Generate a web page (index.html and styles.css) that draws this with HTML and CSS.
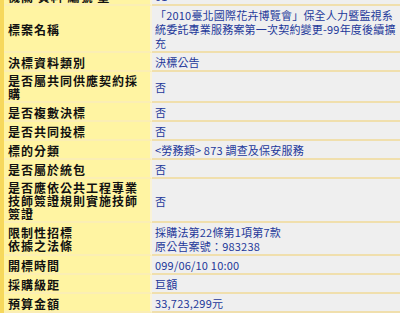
FILE: index.html
```html
<!DOCTYPE html>
<html lang="zh-Hant">
<head>
<meta charset="utf-8">
<title>決標公告</title>
<link rel="stylesheet" href="styles.css">
</head>
<body>
<div class="frame">
<table class="info">
<tbody>
<tr><th>機關 資料 編號 量</th><td>01</td></tr>
<tr><th>標案名稱</th><td>「2010臺北國際花卉博覽會」保全人力暨監視系統委託專業服務案第一次契約變更-99年度後續擴充</td></tr>
<tr><th>決標資料類別</th><td>決標公告</td></tr>
<tr><th>是否屬共同供應契約採購</th><td>否</td></tr>
<tr><th>是否複數決標</th><td>否</td></tr>
<tr><th>是否共同投標</th><td>否</td></tr>
<tr><th>標的分類</th><td>&lt;勞務類&gt; 873 調查及保安服務</td></tr>
<tr><th>是否屬於統包</th><td>否</td></tr>
<tr><th>是否應依公共工程專業技師簽證規則實施技師簽證</th><td>否</td></tr>
<tr><th>限制性招標<br>依據之法條</th><td>採購法第22條第1項第7款<br>原公告案號：983238</td></tr>
<tr><th>開標時間</th><td>099/06/10 10:00</td></tr>
<tr><th>採購級距</th><td>巨額</td></tr>
<tr><th>預算金額</th><td>33,723,299元</td></tr>
</tbody>
</table>
</div>
</body>
</html>
```

FILE: styles.css
```css
html, body {
  margin: 0;
  padding: 0;
  background: #ffffff;
}
body {
  width: 400px;
  height: 313px;
  overflow: hidden;
}
.frame {
  margin-top: -13px;
  border-left: 4px solid #f6d85c;
  width: 396px;
}
.info {
  width: 396px;
  border-collapse: separate;
  border-spacing: 0;
  table-layout: fixed;
  font-family: "Noto Sans CJK TC", "Liberation Sans", sans-serif;
}
.info th {
  width: 140px;
  background: #fff4a2;
  color: #111111;
  font-size: 12px;
  font-weight: bold;
  letter-spacing: 1px;
  line-height: 13px;
  text-align: left;
  vertical-align: middle;
  padding: 2px 2px 1px 4px;
  border-bottom: 2px solid #fbeeb4;
  border-right: 2px solid #faf3d6;
}
.info td {
  background: #efefef;
  color: #23389a;
  font-size: 11px;
  letter-spacing: 0.2px;
  line-height: 14px;
  vertical-align: middle;
  padding: 2px 2px 1px 3px;
  border-bottom: 2px solid #f0dfad;
}
```
